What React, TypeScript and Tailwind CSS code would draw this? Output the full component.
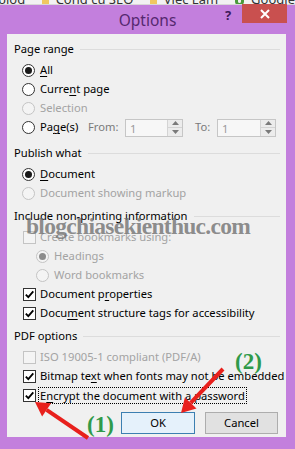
import React from 'react';

const font = { fontFamily: '"Noto Sans", "Open Sans", sans-serif' };
const serif = { fontFamily: '"Liberation Serif", serif' };

function Radio({ checked, disabled }: { checked?: boolean; disabled?: boolean }) {
  return (
    <span
      className={`w-[13px] h-[13px] rounded-full border flex items-center justify-center shrink-0 ${
        disabled ? 'border-[#c4c4c4] bg-[#f4f4f4]' : 'border-[#333] bg-white'
      }`}
    >
      {checked && <span className={`w-[7px] h-[7px] rounded-full ${disabled ? 'bg-[#8c8c8c]' : 'bg-[#1a1a1a]'}`} />}
    </span>
  );
}

function Check({ checked, disabled }: { checked?: boolean; disabled?: boolean }) {
  return (
    <span
      className={`w-[13px] h-[13px] border flex items-center justify-center shrink-0 ${
        disabled ? 'border-[#c4c4c4] bg-[#f4f4f4]' : 'border-[#333] bg-white'
      }`}
    >
      {checked && (
        <svg width="11" height="11" viewBox="0 0 11 11">
          <path d="M1.8 5.6 L4.3 8.2 L9.3 2.4" fill="none" stroke="#000" strokeWidth="1.8" />
        </svg>
      )}
    </span>
  );
}

function Heading({ children, className = '' }: { children: React.ReactNode; className?: string }) {
  return (
    <div className={`h-[19px] flex items-center pr-[6px] ${className}`}>
      <span className="text-black whitespace-nowrap">{children}</span>
      <span className="flex-1 ml-[6px] h-px bg-[#dcdcdc]" />
    </div>
  );
}

// radio rows: circle starts at x 22, label at x 40
function RadioRow({ checked, disabled, sub, className = '', children }: { checked?: boolean; disabled?: boolean; sub?: boolean; className?: string; children: React.ReactNode }) {
  return (
    <div className={`h-[19px] flex items-center whitespace-nowrap ${sub ? 'pl-[22px]' : 'pl-[8px]'} ${disabled ? 'text-[#a3a3a3]' : ''} ${className}`}>
      <Radio checked={checked} disabled={disabled} />
      <span className="ml-[5px]">{children}</span>
    </div>
  );
}

function CheckRow({ checked, disabled, className = '', children }: { checked?: boolean; disabled?: boolean; className?: string; children: React.ReactNode }) {
  return (
    <div className={`h-[19px] flex items-center whitespace-nowrap pl-[9px] ${disabled ? 'text-[#a3a3a3]' : ''} ${className}`}>
      <Check checked={checked} disabled={disabled} />
      <span className="ml-[4px]">{children}</span>
    </div>
  );
}

function U({ children }: { children: React.ReactNode }) {
  return <span className="underline underline-offset-2">{children}</span>;
}

function Spin({ className = '' }: { className?: string }) {
  return (
    <div className={`h-[18px] border border-[#c6c6c6] bg-[#f7f7f7] flex ${className}`}>
      <span className="flex-1 pl-[4px] text-[#9a9a9a] leading-[17px]">1</span>
      <div className="w-[15px] flex flex-col border-l border-[#d4d4d4]">
        <span className="flex-1 flex items-center justify-center bg-[#ececec] border-b border-[#d4d4d4]">
          <svg width="7" height="4" viewBox="0 0 7 4"><path d="M0 4 L3.5 0 L7 4Z" fill="#7a7a7a" /></svg>
        </span>
        <span className="flex-1 flex items-center justify-center bg-[#ececec]">
          <svg width="7" height="4" viewBox="0 0 7 4"><path d="M0 0 L3.5 4 L7 0Z" fill="#7a7a7a" /></svg>
        </span>
      </div>
    </div>
  );
}

export default function App() {
  return (
    <div className="relative w-[295px] h-[449px] bg-[#c37fdd] flex flex-col overflow-hidden text-[11.2px]" style={font}>
      {/* browser bookmarks strip, mostly cut off */}
      <div className="h-[5px] bg-[#f2f2f2] overflow-hidden border-b border-[#d8d8d8]">
        <div className="-mt-[10px] flex items-center gap-[7px] text-[13px] text-[#333] whitespace-nowrap">
          <span className="-ml-[2px]">blog</span>
          <span className="ml-[10px] w-[13px] h-[12px] bg-[#f0c860]" />
          <span>Công cụ SEO</span>
          <span className="ml-[10px] w-[13px] h-[12px] bg-[#f0c860]" />
          <span>Việc Làm</span>
          <span className="ml-[10px] w-[12px] h-[12px] rounded-full border-[3px] border-[#4a9a3c]" />
          <span>Google</span>
        </div>
      </div>

      {/* title bar */}
      <div className="h-[29px] flex items-start">
        <div className="w-[71px]" />
        <div className="flex-1 text-center pt-[4px] text-[15.5px] text-[#55286f]">Options</div>
        <div className="w-[71px] flex items-start">
          <span className="w-[8px] mt-[1px] text-center text-[13px] font-bold text-[#3d1a5a]">?</span>
          <span className="ml-[10px] w-[45px] h-[19px] -mt-px bg-[#c9504f] flex items-center justify-center">
            <svg width="10" height="10" viewBox="0 0 10 10">
              <path d="M1 1 L9 9 M9 1 L1 9" stroke="#fff" strokeWidth="2" />
            </svg>
          </span>
        </div>
      </div>

      {/* client area */}
      <div className="ml-[7px] mr-[9px] h-[403px] bg-[#f0f0f0] pl-[7px] pt-[6px] text-black">
        <Heading>Page range</Heading>
        <RadioRow checked className="mt-[2px]"><U>A</U>ll</RadioRow>
        <RadioRow>Curre<U>n</U>t page</RadioRow>
        <RadioRow disabled>Selection</RadioRow>
        <div className="h-[19px] flex items-center pl-[8px] whitespace-nowrap">
          <Radio />
          <span className="ml-[5px] w-[48px]">Pa<U>g</U>e(s)</span>
          <span className="w-[37px] text-[#7a7a7a]">From:</span>
          <Spin className="w-[58px]" />
          <span className="ml-[12px] w-[22px] text-[#7a7a7a]">To:</span>
          <Spin className="w-[59px]" />
        </div>

        <Heading className="mt-[7px]">Publish what</Heading>
        <RadioRow checked className="mt-[2px]"><U>D</U>ocument</RadioRow>
        <RadioRow disabled>Document showing markup</RadioRow>

        <Heading className="mt-[4px]">Include non-printing information</Heading>
        <CheckRow disabled className="mt-[2px]">Create bookmarks using:</CheckRow>
        <RadioRow sub checked disabled>Headings</RadioRow>
        <RadioRow sub disabled>Word bookmarks</RadioRow>
        <CheckRow checked>Document p<U>r</U>operties</CheckRow>
        <CheckRow checked>Docu<U>m</U>ent structure tags for accessibility</CheckRow>

        <Heading className="mt-[4px]">PDF options</Heading>
        <CheckRow disabled className="mt-[2px]">ISO 19005-1 compliant (PDF/A)</CheckRow>
        <CheckRow checked>Bitmap te<U>x</U>t when fonts may not be embedded</CheckRow>
        <div className="h-[19px] flex items-center whitespace-nowrap pl-[9px]">
          <Check checked />
          <span className="ml-[2px] border border-dotted border-black px-px leading-[15px]">E<U>n</U>crypt the document with a password</span>
        </div>

        <div className="mt-[7px] flex justify-end gap-[10px] pr-[8px]">
          <div className="w-[74px] h-[22px] border border-[#3c7fb1] bg-[#e5f1fb] flex items-center justify-center">OK</div>
          <div className="w-[73px] h-[22px] border border-[#adadad] bg-[#e1e1e1] flex items-center justify-center">Cancel</div>
        </div>
      </div>

      {/* watermark */}
      <div className="absolute left-[26px] top-[209px] text-[23.5px] font-bold tracking-[-0.7px] text-[#707070]/80 whitespace-nowrap" style={serif}>
        blogchiasekienthuc.com
      </div>

      {/* annotations */}
      <svg className="absolute inset-0" width="295" height="449" viewBox="0 0 295 449">
        <line x1="223" y1="369" x2="190.7" y2="402.9" stroke="#e8201c" strokeWidth="4" />
        <path d="M181 413 L196.5 408.4 L184.9 397.4 Z" fill="#e8201c" />
        <line x1="88" y1="438" x2="46.6" y2="409.9" stroke="#e8201c" strokeWidth="4" />
        <path d="M35 402 L51.1 403.3 L42.1 416.5 Z" fill="#e8201c" />
      </svg>
      <span className="absolute left-[235px] top-[350px] text-[23px] font-bold text-[#2f9a4a] leading-none" style={serif}>
        (2)
      </span>
      <span className="absolute left-[87px] top-[413px] text-[23px] font-bold text-[#2f9a4a] leading-none" style={serif}>
        (1)
      </span>
    </div>
  );
}
